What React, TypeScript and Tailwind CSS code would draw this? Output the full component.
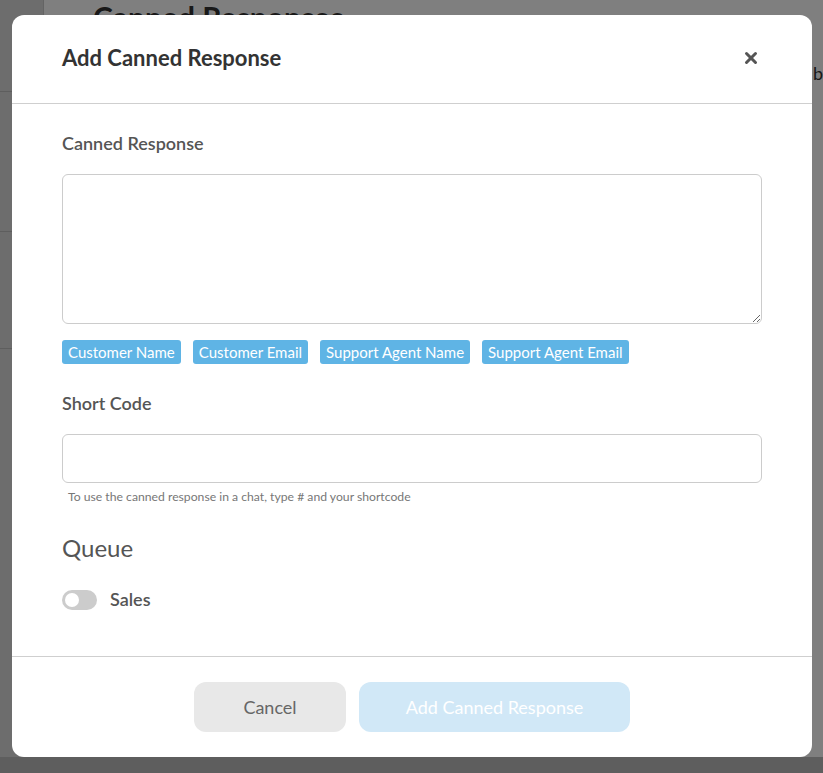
import React from 'react';
import { X } from 'lucide-react';

const tags = ['Customer Name', 'Customer Email', 'Support Agent Name', 'Support Agent Email'];

export default function App() {
  return (
    <div className="relative w-[823px] h-[773px] overflow-hidden bg-[#f5f5f5] font-['Lato',sans-serif]">
      {/* page behind the modal */}
      <div className="flex h-full">
        <aside className="w-[44px] shrink-0 bg-[#dadada] border-r border-[#c8c8c8] flex flex-col">
          <div className="h-[92px] border-b border-[#bdbdbd]" />
          <div className="h-[140px] border-b border-[#bdbdbd] flex items-center justify-end text-[18px] text-[#444] overflow-hidden">er</div>
          <div className="h-[117px] border-b border-[#bdbdbd]" />
        </aside>
        <main className="flex-1 bg-white pl-[49px] pt-[2px]">
          <h1 className="text-[30px] font-bold text-[#333] leading-none">Canned Responses</h1>
        </main>
      </div>
      <div className="absolute inset-x-0 bottom-0 h-[16px] bg-[#bcbcbc]" />
      <div className="absolute right-0 top-[60px] text-[18px] text-[#333]">b</div>

      {/* overlay */}
      <div className="absolute inset-0 bg-black/50" />

      {/* modal */}
      <div className="absolute left-[12px] top-[15px] w-[800px] h-[742px] bg-white rounded-[12px] flex flex-col">
        <header className="h-[89px] shrink-0 flex items-center justify-between pl-[50px] pr-[52px] pb-[3px] border-b border-[#cfcfcf]">
          <h2 className="text-[22px] font-bold text-[#333]">Add Canned Response</h2>
          <X className="w-[18px] h-[18px] text-[#555]" strokeWidth={4} />
        </header>

        <div className="flex-1 px-[50px] pt-[27px]">
          <label className="block text-[18px] font-semibold text-[#555] leading-[24px]">Canned Response</label>
          <textarea className="mt-[19px] block w-full h-[150px] border border-[#cccccc] rounded-[6px] resize-y outline-none" />
          <div className="mt-[16px] flex gap-[12px]">
            {tags.map((t) => (
              <span key={t} className="h-[24px] px-[6px] flex items-center rounded-[3px] bg-[#5fb4e5] text-white text-[15px]">
                {t}
              </span>
            ))}
          </div>

          <label className="block mt-[27px] text-[18px] font-semibold text-[#555] leading-[24px]">Short Code</label>
          <input className="mt-[19px] block w-full h-[49px] border border-[#cccccc] rounded-[6px] outline-none" />
          <p className="mt-[6px] ml-[6px] text-[12.2px] text-[#777] leading-[16px]">
            To use the canned response in a chat, type # and your shortcode
          </p>

          <h3 className="mt-[28px] text-[24px] text-[#555] leading-[30px]">Queue</h3>
          <div className="mt-[23px] flex items-center gap-[13px]">
            <div className="w-[35px] h-[20px] rounded-full bg-[#cccccc] p-[3px] flex items-center">
              <div className="w-[14px] h-[14px] rounded-full bg-white" />
            </div>
            <span className="text-[18px] font-semibold text-[#555]">Sales</span>
          </div>
        </div>

        <footer className="h-[101px] shrink-0 border-t border-[#cfcfcf] flex justify-center items-start pt-[25px] gap-[13px]">
          <button className="w-[152px] h-[50px] rounded-[12px] bg-[#e8e8e8] text-[18px] text-[#666]">Cancel</button>
          <button className="w-[271px] h-[50px] rounded-[12px] bg-[#d1e8f7] text-[18px] text-white">Add Canned Response</button>
        </footer>
      </div>
    </div>
  );
}
